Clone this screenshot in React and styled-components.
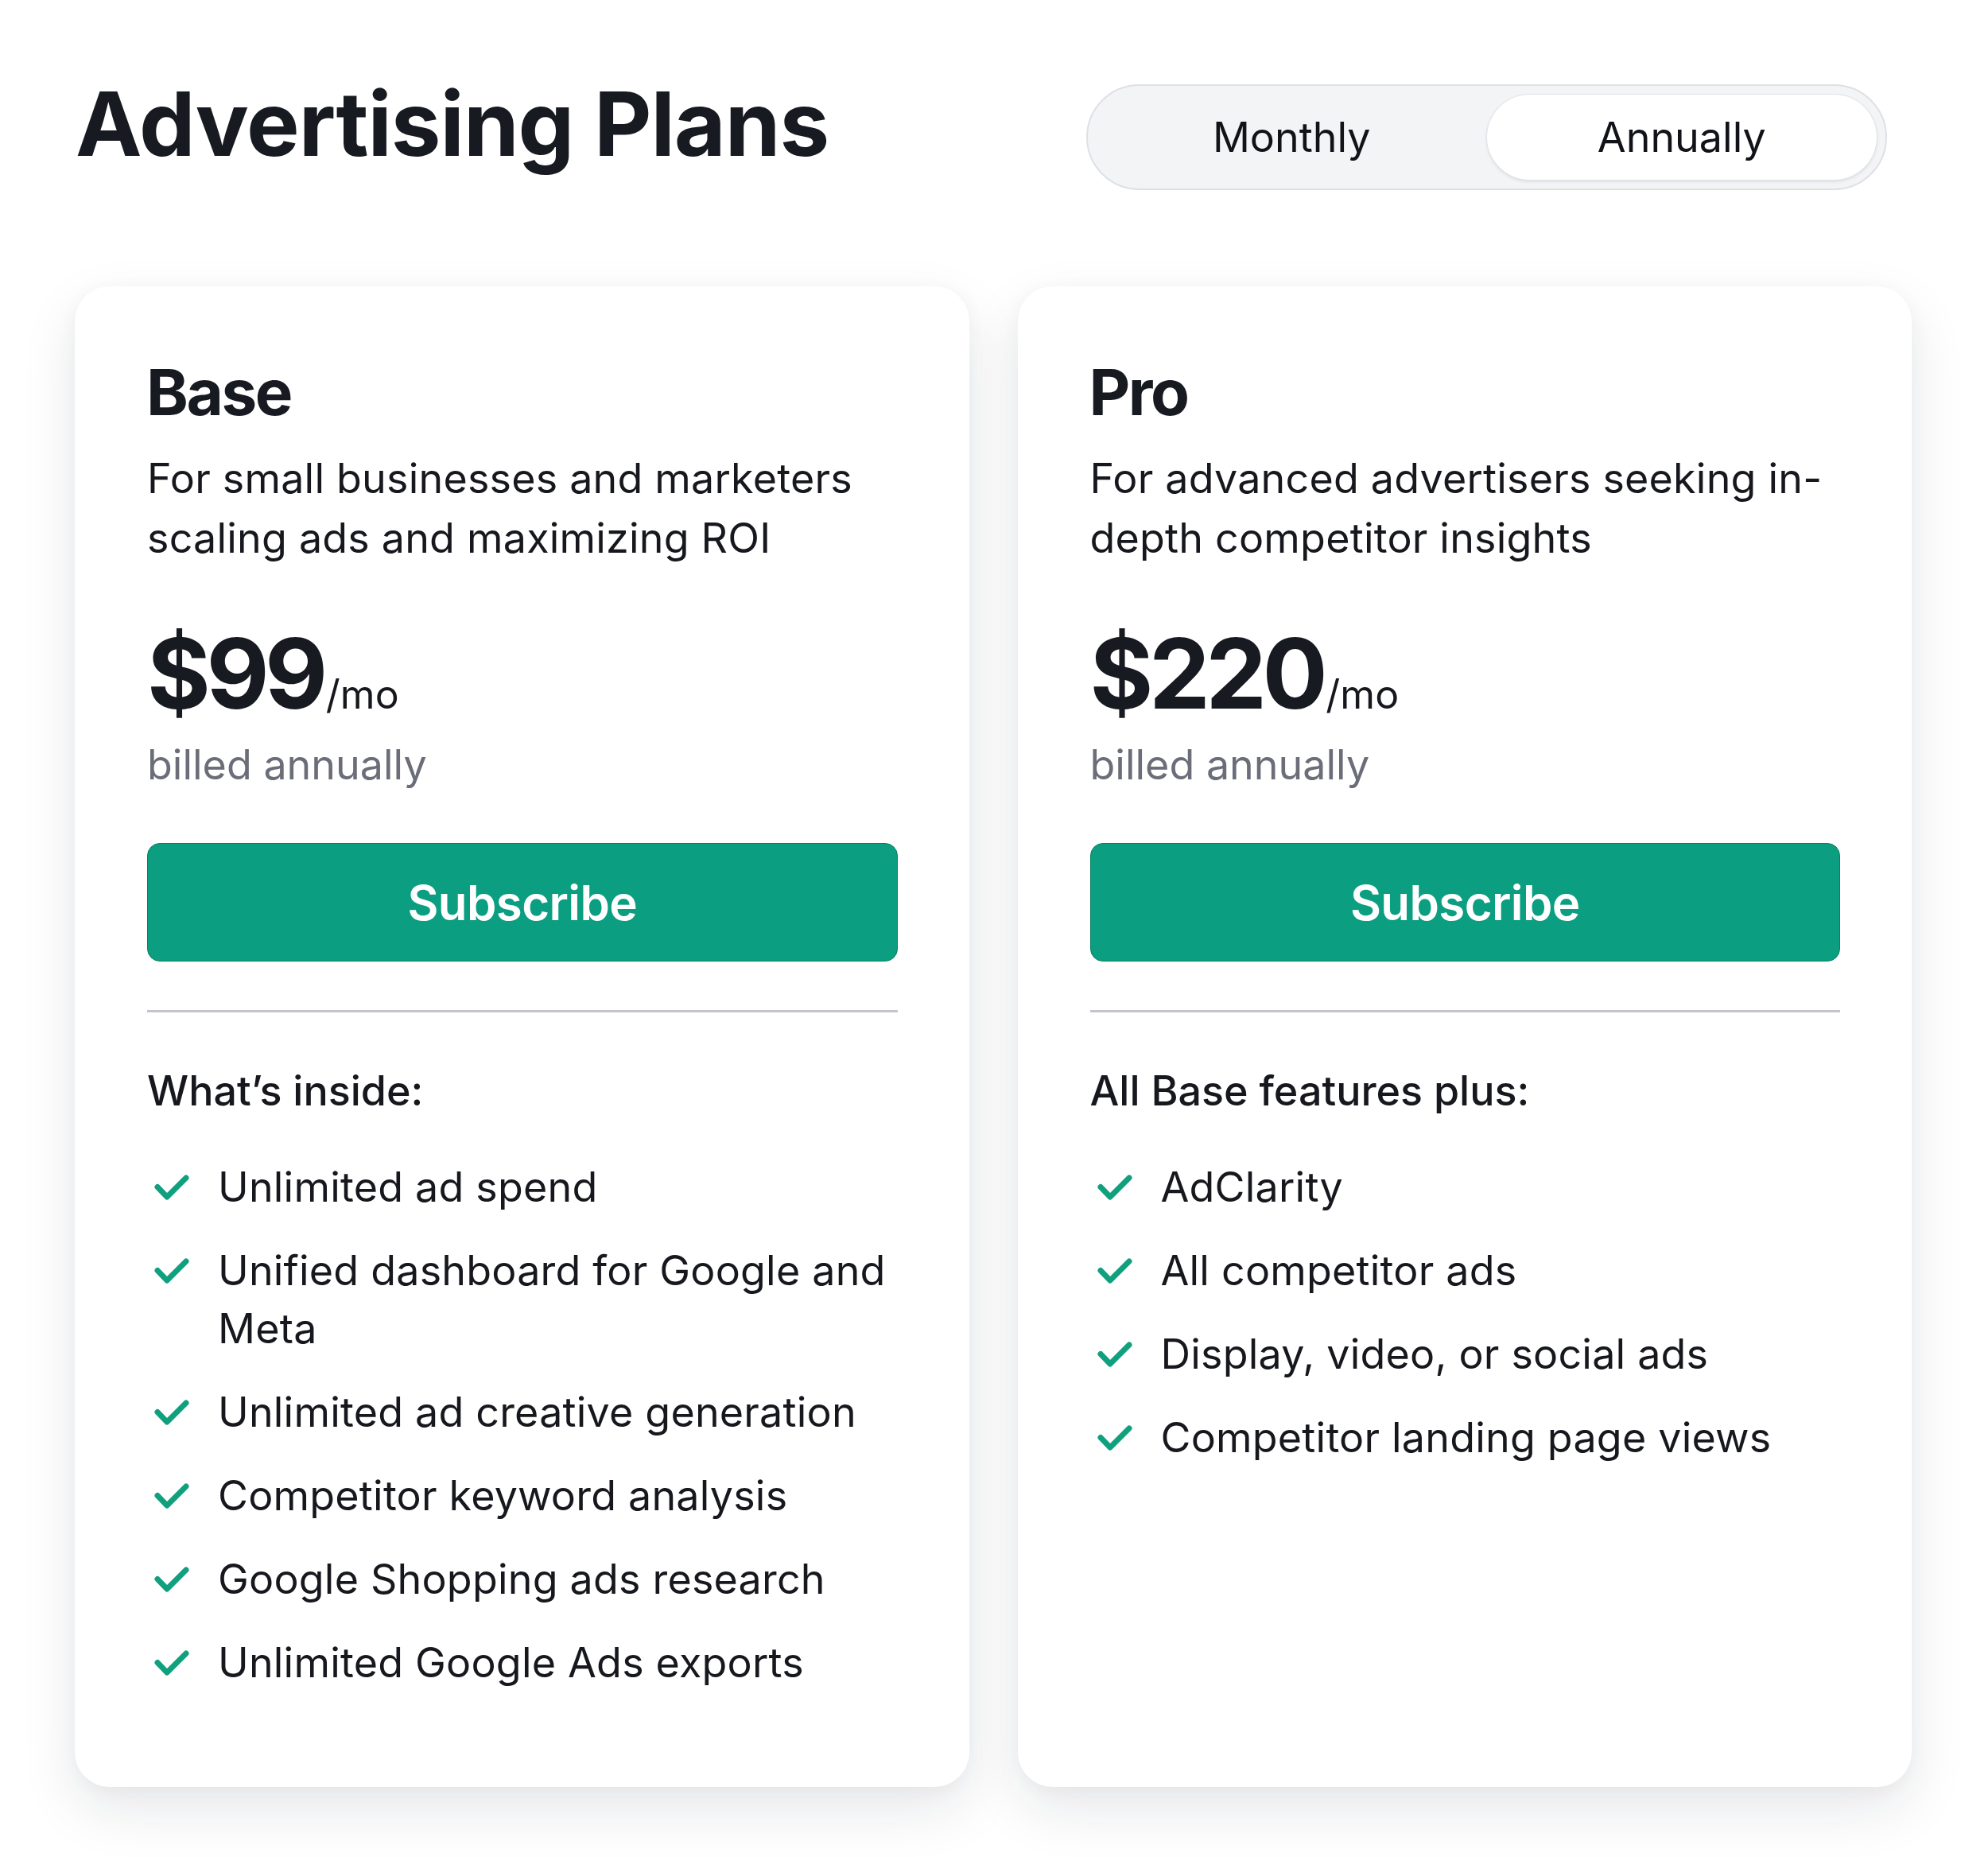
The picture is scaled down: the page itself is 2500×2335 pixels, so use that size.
import React from "react";
import styled, { createGlobalStyle } from "styled-components";

const GlobalStyle = createGlobalStyle`
  html, body {
    margin: 0;
    padding: 0;
    background: #ffffff;
  }
  body {
    font-family: Inter, "Noto Sans", "Liberation Sans", sans-serif;
    color: #16181e;
    -webkit-font-smoothing: antialiased;
  }
  * { box-sizing: border-box; }
`;

const Page = styled.div`
  width: 2500px;
  min-height: 2335px;
  padding-bottom: 88px;
`;

const Header = styled.header`
  display: flex;
  justify-content: space-between;
  align-items: flex-start;
  padding: 88px 127px 0 95px;
`;

const Title = styled.h1`
  margin: 0;
  font-size: 112px;
  line-height: 1.2;
  font-weight: 700;
  letter-spacing: -1px;
  color: #181a21;
`;

const Toggle = styled.div`
  margin-top: 18px;
  width: 1007px;
  height: 133px;
  display: flex;
  padding: 11px;
  border: 2px solid #dfe0e6;
  border-radius: 67px;
  background: #f3f4f6;
`;

const ToggleOption = styled.div`
  flex: 1;
  display: flex;
  align-items: center;
  justify-content: center;
  border-radius: 54px;
  font-size: 52px;
  font-weight: 400;
  color: #111318;
  background: ${(p) => (p.$active ? "#ffffff" : "transparent")};
  box-shadow: ${(p) =>
    p.$active ? "0 0 0 1px #e2e3e8, 0 2px 4px rgba(20, 24, 40, 0.12)" : "none"};
`;

const Cards = styled.main`
  display: grid;
  grid-template-columns: 1fr 1fr;
  gap: 61px;
  padding: 0 96px 0 94px;
  margin-top: 121px;
`;

const Card = styled.section`
  height: 1887px;
  background: #ffffff;
  border-radius: 44px;
  padding: 84px 90px 0 91px;
  box-shadow: 0 28px 70px rgba(24, 30, 52, 0.10), 0 4px 24px rgba(24, 30, 52, 0.04);
  display: flex;
  flex-direction: column;
`;

const PlanName = styled.h2`
  margin: 0 0 0 -1px;
  font-size: 80px;
  line-height: 98px;
  font-weight: 700;
  letter-spacing: -2.5px;
  color: #181a21;
`;

const Description = styled.p`
  margin: 22px 0 0;
  font-size: 52px;
  line-height: 75px;
  font-weight: 400;
  letter-spacing: 0.2px;
  color: #16181e;
`;

const PriceRow = styled.div`
  margin-top: 72px;
  display: flex;
  align-items: baseline;
`;

const Amount = styled.span`
  font-size: 122px;
  line-height: 1;
  font-weight: 700;
  letter-spacing: -5.5px;
  color: #181a21;
`;

const Per = styled.span`
  font-size: 50px;
  line-height: 1;
  color: #16181e;
  margin-left: 3px;
`;

const Billing = styled.div`
  margin-top: 16px;
  font-size: 52px;
  line-height: 75px;
  color: #6b6d78;
`;

const SubscribeButton = styled.button`
  margin-top: 61px;
  height: 149px;
  width: 100%;
  border: 1px solid #08805f;
  border-radius: 16px;
  background: #0b9e80;
  color: #ffffff;
  font-family: inherit;
  font-size: 60px;
  font-weight: 600;
  letter-spacing: -0.6px;
  cursor: pointer;
`;

const Divider = styled.hr`
  margin: 61px 0 0;
  border: 0;
  height: 3px;
  background: #c4c5cc;
`;

const ListTitle = styled.div`
  margin-top: 61px;
  font-size: 52px;
  line-height: 75px;
  font-weight: 500;
  color: #16181e;
`;

const FeatureList = styled.ul`
  list-style: none;
  margin: 47px 0 0;
  padding: 0;
  display: flex;
  flex-direction: column;
  gap: 32px;
`;

const Feature = styled.li`
  display: grid;
  grid-template-columns: 89px 1fr;
  font-size: 52px;
  line-height: 73px;
  letter-spacing: 0.2px;
  color: #16181e;
`;

const CheckCell = styled.span`
  height: 73px;
  display: flex;
  align-items: center;
  padding-left: 8px;
`;

const Check = () => (
  <svg width="46" height="36" viewBox="0 0 46 36" fill="none">
    <path
      d="M5 17.5 L17 30 L41 6"
      stroke="#11a07e"
      strokeWidth="7"
      strokeLinecap="round"
      strokeLinejoin="round"
    />
  </svg>
);

const plans = [
  {
    name: "Base",
    description: "For small businesses and marketers scaling ads and maximizing ROI",
    price: "$99",
    listTitle: "What’s inside:",
    features: [
      "Unlimited ad spend",
      "Unified dashboard for Google and Meta",
      "Unlimited ad creative generation",
      "Competitor keyword analysis",
      "Google Shopping ads research",
      "Unlimited Google Ads exports",
    ],
  },
  {
    name: "Pro",
    description: "For advanced advertisers seeking in-depth competitor insights",
    price: "$220",
    listTitle: "All Base features plus:",
    features: [
      "AdClarity",
      "All competitor ads",
      "Display, video, or social ads",
      "Competitor landing page views",
    ],
  },
];

export default function App() {
  return (
    <>
      <GlobalStyle />
      <Page>
        <Header>
          <Title>Advertising Plans</Title>
          <Toggle>
            <ToggleOption>Monthly</ToggleOption>
            <ToggleOption $active>Annually</ToggleOption>
          </Toggle>
        </Header>
        <Cards>
          {plans.map((plan) => (
            <Card key={plan.name}>
              <PlanName>{plan.name}</PlanName>
              <Description>{plan.description}</Description>
              <PriceRow>
                <Amount>{plan.price}</Amount>
                <Per>/mo</Per>
              </PriceRow>
              <Billing>billed annually</Billing>
              <SubscribeButton>Subscribe</SubscribeButton>
              <Divider />
              <ListTitle>{plan.listTitle}</ListTitle>
              <FeatureList>
                {plan.features.map((f) => (
                  <Feature key={f}>
                    <CheckCell>
                      <Check />
                    </CheckCell>
                    <span>{f}</span>
                  </Feature>
                ))}
              </FeatureList>
            </Card>
          ))}
        </Cards>
      </Page>
    </>
  );
}
